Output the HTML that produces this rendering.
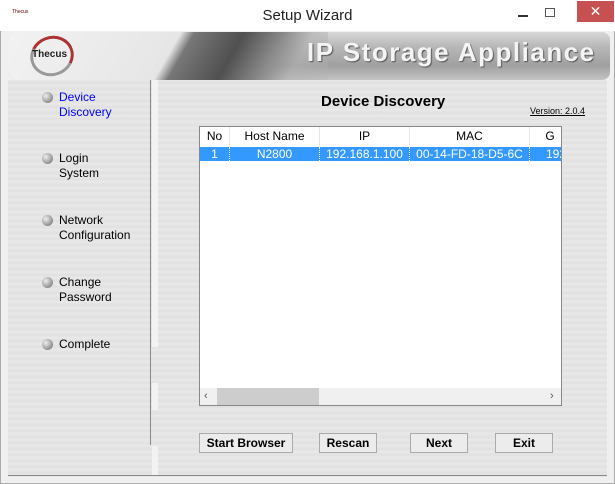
<!DOCTYPE html><html><head><style>
*{margin:0;padding:0;box-sizing:border-box}
body{width:615px;height:484px;position:relative;overflow:hidden;background:#fff;font-family:"Liberation Sans",sans-serif;font-size:12px}
.a{position:absolute}
.win{left:0;top:0;width:615px;height:484px;border:1px solid #aaa;background:#f0f0f0}
.title{left:0;top:0;width:615px;height:31px;background:#fff;text-align:center;font-size:15px;line-height:32px;color:#222}
.banner{left:8px;top:32px;width:602px;height:48px;border-radius:8px;background:linear-gradient(180deg,#d8d8d8 0%,#b8b8b8 30%,#a0a0a0 70%,#c4c4c4 100%)}
.content{left:8px;top:80px;width:599px;height:397px;background:repeating-linear-gradient(180deg,#e8e8e8 0,#e0e0e0 3px,#eaeaea 6px)}
.nav{left:45px;color:#000;font-size:12px;line-height:15px}
.dot{position:absolute;left:-3px;top:2px;width:11px;height:11px;border-radius:50%;background:radial-gradient(circle at 35% 35%,#eee,#666)}
.nav span{display:block;padding-left:14px}
.btn{top:433px;height:20px;border:1px solid #aaa;background:#ececec;font-weight:bold;font-size:12px;text-align:center;line-height:18px}
.lv{left:199px;top:126px;width:363px;height:280px;border:1px solid #888;background:#fff;overflow:hidden}
.hd{position:absolute;top:0;height:19px;border-right:1px solid #e5e5e5;text-align:center;line-height:19px}
.rw{position:absolute;top:20px;height:14px;text-align:center;line-height:14px;color:#fff;border-right:1px dotted #fff}
</style></head><body>
<div class="a win"></div>
<div class="a title">Setup Wizard</div>
<div class="a" style="left:12px;top:9px;font-size:5px;color:#600">Thecus</div>
<div class="a" style="left:518px;top:15px;width:10px;height:2px;background:#333"></div>
<div class="a" style="left:545px;top:8px;width:10px;height:9px;border:1px solid #555"></div>
<div class="a" style="left:577px;top:1px;width:37px;height:21px;background:#c75050;color:#fff;text-align:center;font-size:14px;line-height:20px">✕</div>
<div class="a banner"></div>
<div class="a" style="left:8px;top:32px;width:320px;height:48px;border-radius:8px 0 0 8px;background:linear-gradient(120deg,#f2f2f2 0,#e6e6e6 150px,#777 162px,#505050 205px,#8a8a8a 240px,rgba(176,176,176,0.6) 265px,rgba(180,180,180,0) 320px)"></div>
<div class="a" style="left:30px;top:36px;width:44px;height:40px;border:3px solid #a33;border-radius:50%;border-color:#a33 #a33 #999 #999;transform:rotate(-20deg)"></div>
<div class="a" style="left:32px;top:49px;font-weight:bold;font-size:10px;color:#222">Thecus</div>
<div class="a" style="left:307px;top:37px;font-size:26px;font-weight:bold;color:#f4f4f4;letter-spacing:1.5px;text-shadow:1px 1px 1px #555">IP Storage Appliance</div>
<div class="a content"></div>
<div class="a" style="left:150px;top:80px;width:1px;height:365px;background:#888"></div>
<div class="a" style="left:152px;top:80px;width:6px;height:267px;background:#f2f2f2"></div>
<div class="a" style="left:152px;top:383px;width:6px;height:27px;background:#f2f2f2"></div>
<div class="a" style="left:152px;top:446px;width:6px;height:30px;background:#f2f2f2"></div>
<div class="a" style="left:8px;top:475px;width:599px;height:1px;background:#888"></div>
<div class="a nav" style="top:90px;color:#00f"><i class="dot"></i><span>Device<br>Discovery</span></div>
<div class="a nav" style="top:151px"><i class="dot"></i><span>Login<br>System</span></div>
<div class="a nav" style="top:213px"><i class="dot"></i><span>Network<br>Configuration</span></div>
<div class="a nav" style="top:275px"><i class="dot"></i><span>Change<br>Password</span></div>
<div class="a nav" style="top:337px"><i class="dot"></i><span>Complete</span></div>
<div class="a" style="left:321px;top:93px;font-size:15px;font-weight:bold">Device Discovery</div>
<div class="a" style="left:530px;top:106px;font-size:9px;text-decoration:underline">Version: 2.0.4</div>
<div class="a lv">
<div class="hd" style="left:0;width:30px">No</div>
<div class="hd" style="left:30px;width:90px">Host Name</div>
<div class="hd" style="left:120px;width:90px">IP</div>
<div class="hd" style="left:210px;width:120px">MAC</div>
<div class="hd" style="left:330px;width:40px;border:none">G</div>
<div style="position:absolute;left:0;top:20px;width:363px;height:14px;background:#3399ff"></div>
<div class="rw" style="left:0;width:30px">1</div>
<div class="rw" style="left:30px;width:90px">N2800</div>
<div class="rw" style="left:120px;width:90px">192.168.1.100</div>
<div class="rw" style="left:210px;width:120px">00-14-FD-18-D5-6C</div>
<div class="rw" style="left:330px;width:40px;border:none;text-align:left;padding-left:16px">192</div>
<div style="position:absolute;left:0;top:261px;width:363px;height:17px;background:#f0f0f0"></div>
<div style="position:absolute;left:17px;top:261px;width:102px;height:17px;background:#cdcdcd"></div>
<div style="position:absolute;left:4px;top:261px;font-size:11px;line-height:17px;color:#555">‹</div>
<div style="position:absolute;left:350px;top:261px;font-size:11px;line-height:17px;color:#555">›</div>
</div>
<div class="a btn" style="left:199px;width:94px">Start Browser</div>
<div class="a btn" style="left:319px;width:58px">Rescan</div>
<div class="a btn" style="left:410px;width:58px">Next</div>
<div class="a btn" style="left:495px;width:58px">Exit</div>
</body></html>
